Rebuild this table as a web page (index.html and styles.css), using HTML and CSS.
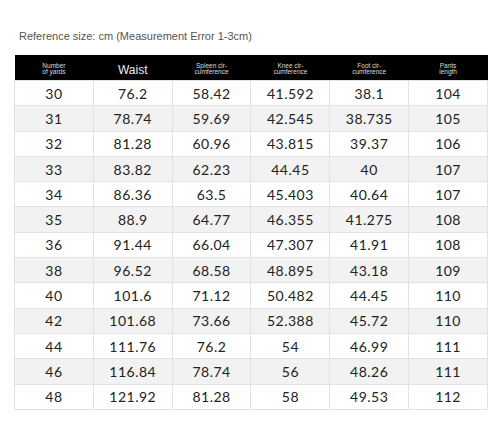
FILE: index.html
```html
<!DOCTYPE html>
<html>
<head>
<meta charset="utf-8">
<link rel="stylesheet" href="styles.css">
</head>
<body>
<div class="page">
  <p class="note">Reference size: cm (Measurement Error 1-3cm)</p>
  <table class="size">
    <thead>
      <tr>
        <th><span class="tiny">Number<br>of yards</span></th>
        <th><span class="big">Waist</span></th>
        <th><span class="tiny">Spleen cir-<br>cumference</span></th>
        <th><span class="tiny">Knee cir-<br>cumference</span></th>
        <th><span class="tiny">Foot cir-<br>cumference</span></th>
        <th><span class="tiny">Pants<br>length</span></th>
      </tr>
    </thead>
    <tbody>
      <tr><td>30</td><td>76.2</td><td>58.42</td><td>41.592</td><td>38.1</td><td>104</td></tr>
      <tr><td>31</td><td>78.74</td><td>59.69</td><td>42.545</td><td>38.735</td><td>105</td></tr>
      <tr><td>32</td><td>81.28</td><td>60.96</td><td>43.815</td><td>39.37</td><td>106</td></tr>
      <tr><td>33</td><td>83.82</td><td>62.23</td><td>44.45</td><td>40</td><td>107</td></tr>
      <tr><td>34</td><td>86.36</td><td>63.5</td><td>45.403</td><td>40.64</td><td>107</td></tr>
      <tr><td>35</td><td>88.9</td><td>64.77</td><td>46.355</td><td>41.275</td><td>108</td></tr>
      <tr><td>36</td><td>91.44</td><td>66.04</td><td>47.307</td><td>41.91</td><td>108</td></tr>
      <tr><td>38</td><td>96.52</td><td>68.58</td><td>48.895</td><td>43.18</td><td>109</td></tr>
      <tr><td>40</td><td>101.6</td><td>71.12</td><td>50.482</td><td>44.45</td><td>110</td></tr>
      <tr><td>42</td><td>101.68</td><td>73.66</td><td>52.388</td><td>45.72</td><td>110</td></tr>
      <tr><td>44</td><td>111.76</td><td>76.2</td><td>54</td><td>46.99</td><td>111</td></tr>
      <tr><td>46</td><td>116.84</td><td>78.74</td><td>56</td><td>48.26</td><td>111</td></tr>
      <tr><td>48</td><td>121.92</td><td>81.28</td><td>58</td><td>49.53</td><td>112</td></tr>
    </tbody>
  </table>
</div>
</body>
</html>
```
FILE: styles.css
```css
html, body {
  margin: 0;
  padding: 0;
  background: #fff;
}
.page {
  width: 500px;
  height: 434px;
  padding: 29px 0 0 14px;
  box-sizing: border-box;
}
.note {
  margin: 0 0 12px 5px;
  font-family: "Liberation Sans", Arial, sans-serif;
  font-size: 11px;
  line-height: 14px;
  color: #555;
}
.size {
  width: 474px;
  border-collapse: collapse;
  table-layout: fixed;
  font-family: "Lato", "DejaVu Sans", sans-serif;
}
.size th {
  background: #000;
  color: #fff;
  height: 25px;
  padding: 0;
  text-align: center;
  vertical-align: middle;
  font-weight: normal;
  border: 0;
}
.tiny {
  display: inline-block;
  font-family: "Liberation Sans", Arial, sans-serif;
  font-size: 6.5px;
  line-height: 6px;
  color: #ddd;
}
.big {
  font-family: "Liberation Sans", Arial, sans-serif;
  font-size: 12px;
  color: #eee;
}
.size td {
  height: 24.3px;
  padding: 0;
  text-align: center;
  vertical-align: middle;
  font-size: 14px;
  color: #222;
  border: 1px solid #e2e2e2;
  letter-spacing: 0.5px;
}
.size tbody tr:nth-child(even) td {
  background: #f2f2f2;
}
```
